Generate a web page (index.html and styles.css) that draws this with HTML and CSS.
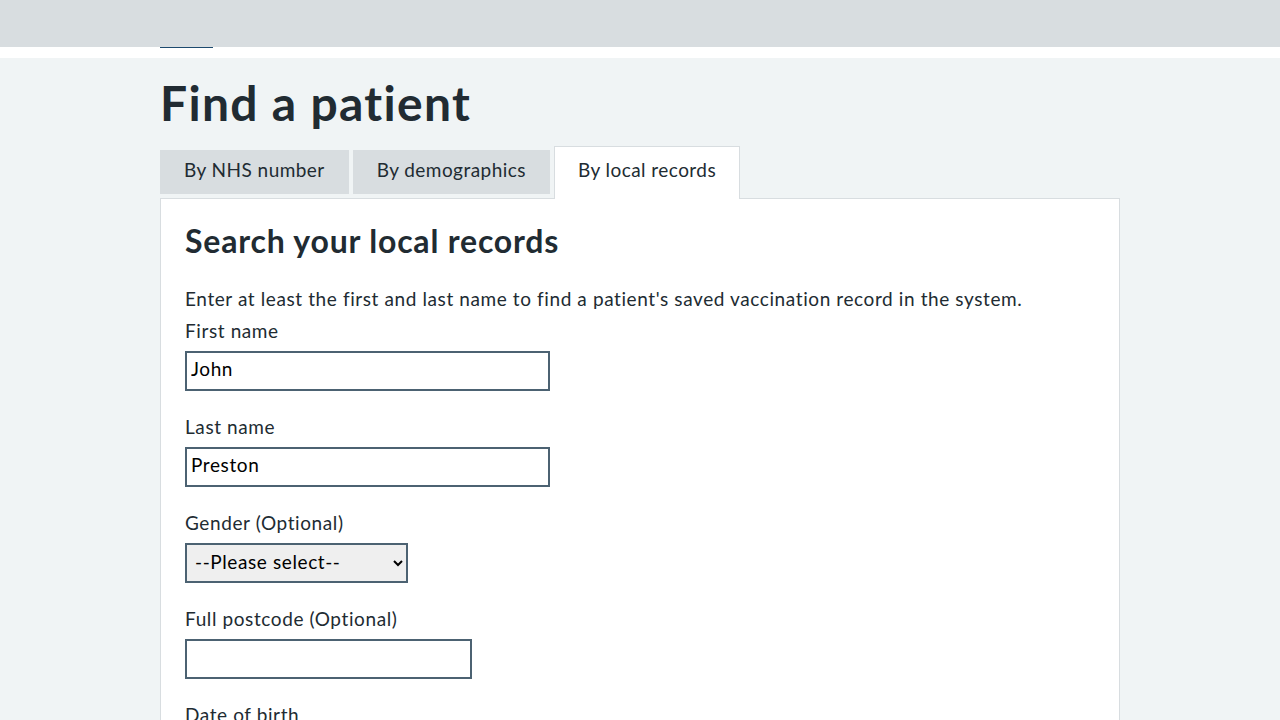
FILE: index.html
```html
<!DOCTYPE html>
<html lang="en">
<head>
<meta charset="utf-8">
<title>Find a patient</title>
<link rel="stylesheet" href="styles.css">
</head>
<body>
<header class="header">
  <div class="header-inner"></div>
</header>
<div class="strip"><div class="strip-inner"><span class="strip-line"></span></div></div>
<main class="main">
  <div class="container">
    <h1 class="title">Find a patient</h1>
    <div class="tabs">
      <ul class="tab-list">
        <li class="tab">By NHS number</li>
        <li class="tab">By demographics</li>
        <li class="tab tab-active">By local records</li>
      </ul>
      <section class="panel">
        <h2 class="panel-title">Search your local records</h2>
        <p class="hint">Enter at least the first and last name to find a patient's saved vaccination record in the system.</p>
        <div class="form-group">
          <label class="label" for="fn">First name</label>
          <input class="input input-name" id="fn" type="text" value="John">
        </div>
        <div class="form-group">
          <label class="label" for="ln">Last name</label>
          <input class="input input-name" id="ln" type="text" value="Preston">
        </div>
        <div class="form-group">
          <label class="label" for="gender">Gender (Optional)</label>
          <select class="select" id="gender">
            <option>--Please select--</option>
            <option>Male</option>
            <option>Female</option>
          </select>
        </div>
        <div class="form-group">
          <label class="label" for="pc">Full postcode (Optional)</label>
          <input class="input input-postcode" id="pc" type="text" value="">
        </div>
        <div class="form-group">
          <label class="label">Date of birth</label>
        </div>
      </section>
    </div>
  </div>
</main>
</body>
</html>
```
FILE: styles.css
```css
* { box-sizing: border-box; }
html, body { margin: 0; padding: 0; }
body {
  background: #f0f4f5;
  color: #212b32;
  font-family: Lato, "Liberation Sans", sans-serif;
  letter-spacing: 0.6px;
}
.header {
  background: #d8dde0;
  height: 47px;
}
.strip {
  background: #ffffff;
  height: 11px;
}
.strip-inner {
  width: 960px;
  margin: 0 auto;
}
.strip-line {
  display: block;
  width: 53px;
  height: 1px;
  background: #1d4a6e;
}
.container {
  width: 960px;
  margin: 0 auto;
}
.title {
  font-size: 48px;
  line-height: 56px;
  font-weight: 700;
  letter-spacing: 1.3px;
  margin: 17px 0 15px;
}
.tab-list {
  list-style: none;
  margin: 0;
  padding: 0;
  display: flex;
  align-items: flex-end;
  gap: 4px;
}
.tab {
  background: #d8dde0;
  font-size: 19px;
  line-height: 28px;
  letter-spacing: 0.45px;
  padding: 6px 24px 10px;
  height: 44px;
  margin-bottom: 4px;
}
.tab-active {
  background: #ffffff;
  border: 1px solid #d8dde0;
  border-bottom: 0;
  height: 53px;
  padding: 9px 23px 0;
  margin-bottom: -1px;
  position: relative;
  z-index: 1;
}
.panel {
  background: #ffffff;
  border: 1px solid #d8dde0;
  padding: 22px 24px 40px;
}
.panel-title {
  font-size: 32px;
  line-height: 40px;
  font-weight: 700;
  letter-spacing: 0.8px;
  margin: 0 0 24px;
}
.hint {
  font-size: 19px;
  line-height: 28px;
  margin: 0 0 4px;
}
.form-group {
  margin-bottom: 22px;
}
.label {
  display: block;
  font-size: 19px;
  line-height: 28px;
  margin-bottom: 6px;
}
.input {
  display: block;
  height: 40px;
  border: 2px solid #4c6272;
  border-radius: 0;
  font-family: inherit;
  font-size: 19px;
  letter-spacing: 0.6px;
  line-height: 28px;
  padding: 0 4px 6px;
  color: #000;
  background: #fff;
}
.input-name { width: 365px; }
.input-postcode { width: 287px; }
.select {
  display: block;
  width: 223px;
  height: 40px;
  border: 2px solid #4c6272;
  border-radius: 0;
  background: #efefef;
  font-family: inherit;
  font-size: 19px;
  letter-spacing: 0.6px;
  color: #000;
  padding: 0 4px 4px;
}
```
